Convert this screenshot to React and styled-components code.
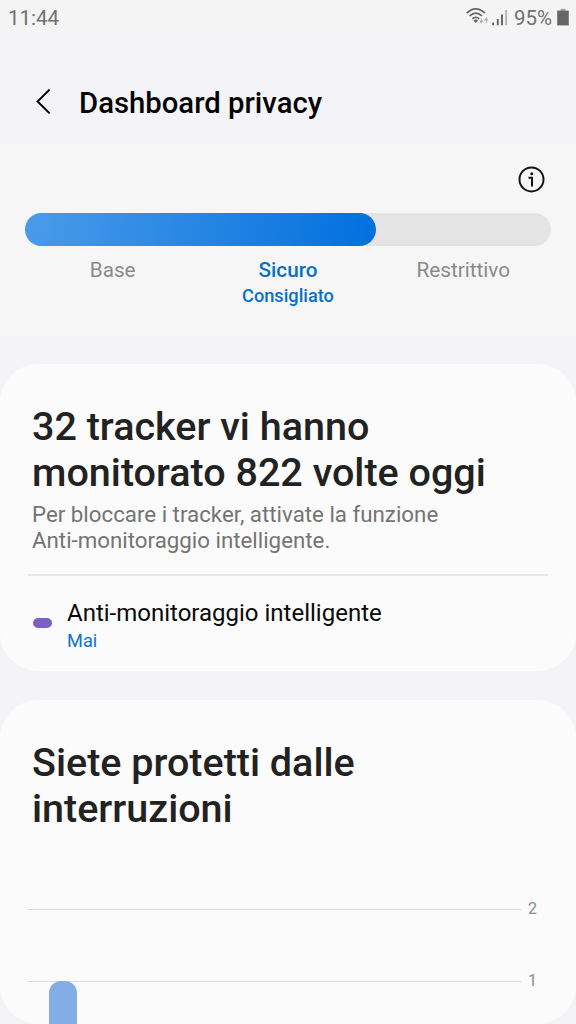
import { createGlobalStyle, styled } from "styled-components";

const levels = [
  { name: "Base" },
  { name: "Sicuro", note: "Consigliato", selected: true },
  { name: "Restrittivo" },
];

const App = () => {
  return (
    <>
      <GlobalStyle />
      <Screen>
        <StatusBar>
          <Clock>11:44</Clock>
          <StatusIcons>
            <WifiIcon />
            <SignalIcon />
            <Battery>95%</Battery>
            <BatteryIcon />
          </StatusIcons>
        </StatusBar>
        <Header>
          <BackButton aria-label="Indietro">
            <svg width="16" height="28" viewBox="0 0 16 28" fill="none">
              <path d="M14.6 0.6 L2.6 12.4 L14.6 24.4" stroke="#000" strokeWidth="2" />
            </svg>
          </BackButton>
          <PageTitle>Dashboard privacy</PageTitle>
        </Header>
        <Protection>
          <InfoButton aria-label="Informazioni">
            <InfoIcon />
          </InfoButton>
          <Track>
            <Fill />
          </Track>
          <Levels>
            {levels.map(({ name, note, selected }) => (
              <Level key={name} $selected={selected}>
                <LevelName $selected={selected}>{name}</LevelName>
                {note && <LevelNote>{note}</LevelNote>}
              </Level>
            ))}
          </Levels>
        </Protection>
        <Cards>
          <Card $height={307}>
            <CardTitle>
              32 tracker vi hanno
              <br />
              monitorato 822 volte oggi
            </CardTitle>
            <Description>
              Per bloccare i tracker, attivate la funzione
              <br />
              Anti-monitoraggio intelligente.
            </Description>
            <Divider />
            <Setting>
              <Marker />
              <div>
                <SettingName>Anti-monitoraggio intelligente</SettingName>
                <SettingValue>Mai</SettingValue>
              </div>
            </Setting>
          </Card>
          <Card $height={324}>
            <CardTitle>
              Siete protetti dalle
              <br />
              interruzioni
            </CardTitle>
            <Chart>
              {[2, 1].map((value) => (
                <GridRow key={value}>
                  <GridLine />
                  <AxisLabel>{value}</AxisLabel>
                </GridRow>
              ))}
              <Bar />
            </Chart>
          </Card>
        </Cards>
      </Screen>
    </>
  );
};

const WifiIcon = () => (
  <svg width="26" height="20" viewBox="0 0 26 20" fill="none">
    <g stroke="#666" strokeWidth="1.7">
      <path d="M0.8 5 Q9.8 -3.2 18.8 5" />
      <path d="M3.6 8 Q9.8 2.2 16 8" />
      <path d="M6.3 10.9 Q9.8 7.8 13.3 10.9" />
    </g>
    <path d="M7.4 12.4 Q9.8 10.6 12.2 12.4 L9.8 15 Z" fill="#666" />
    <path d="M13.2 12.6 h4 l-2 3.2 Z" fill="#aaa" />
    <path d="M15.2 10 v3 M20.4 11.4 v4" stroke="#bbb" strokeWidth="1" />
    <path d="M18.2 12.4 h4.4 l-2.2 -3.2 Z" fill="#aaa" />
  </svg>
);

const SignalIcon = () => (
  <svg width="17" height="18" viewBox="0 0 17 18">
    <path d="M0.2 13.5 h1.9 v2.8 h-1.9 Z M4.8 10 h1.9 v6.3 h-1.9 Z M9 5.5 h2 v10.8 h-2 Z" fill="#666" />
    <path d="M13.2 1 h1.9 v15.3 h-1.9 Z" fill="#b5b5b5" />
  </svg>
);

const BatteryIcon = () => (
  <svg width="12" height="20" viewBox="0 0 12 20">
    <path d="M3.5 0.8 h5 v2.2 h-5 Z" fill="#a8a8a8" />
    <path d="M0.2 2.6 h11.6 v14.8 h-11.6 Z" fill="#666" />
  </svg>
);

const InfoIcon = () => (
  <svg width="28" height="28" viewBox="0 0 28 28" fill="none">
    <circle cx="13.5" cy="14.4" r="12" stroke="#111" strokeWidth="2" />
    <circle cx="13.8" cy="8.7" r="1.5" fill="#111" />
    <path d="M10.5 12.8 H14 V21.6" stroke="#111" strokeWidth="2" />
  </svg>
);

const GlobalStyle = createGlobalStyle`
  * {
    box-sizing: border-box;
  }

  body {
    margin: 0;
    background-color: #f4f4f8;
    font-family: Roboto, "Liberation Sans", sans-serif;
  }
`;

const Screen = styled.main`
  width: 576px;
  height: 1024px;
  overflow: hidden;
  background-color: #f4f4f8;
`;

const StatusBar = styled.div`
  display: flex;
  justify-content: space-between;
  align-items: center;
  height: 32px;
  padding: 3px 7px 0 8px;
  background-color: #f4f4f4;
  color: #707070;
  font-size: 20.5px;
`;

const Clock = styled.span`
  line-height: 28px;
`;

const StatusIcons = styled.div`
  display: flex;
  align-items: center;
`;

const Battery = styled.span`
  margin: 0 5px 0 5px;
  line-height: 28px;
`;

const Header = styled.header`
  display: flex;
  align-items: center;
  height: 112px;
  padding: 29px 0 0 35px;
`;

const BackButton = styled.button`
  display: flex;
  width: 44px;
  padding: 0;
  border: none;
  background: none;
`;

const PageTitle = styled.h1`
  margin: 0;
  font-weight: 500;
  font-size: 29.3px;
  line-height: 36px;
  color: #050505;
`;

const Protection = styled.section`
  height: 192px;
  padding: 21px 25px 0;
  background-color: #f6f6f6;
`;

const InfoButton = styled.button`
  display: flex;
  margin: 0 5px 0 auto;
  padding: 0;
  border: none;
  background: none;
`;

const Track = styled.div`
  height: 33px;
  margin-top: 20px;
  border-radius: 17px;
  background-color: #e4e4e4;
`;

const Fill = styled.div`
  width: 351px;
  height: 33px;
  border-radius: 17px;
  background: linear-gradient(100deg, #4b9be9, #0070de);
`;

const Levels = styled.div`
  display: grid;
  grid-template-columns: repeat(3, 1fr);
  margin-top: 11px;
`;

const Level = styled.div`
  text-align: center;
  color: ${({ $selected }) => ($selected ? "#0870c8" : "#8a8a8a")};
`;

const LevelName = styled.div`
  font-weight: ${({ $selected }) => ($selected ? 500 : 400)};
  font-size: 20.7px;
  line-height: 26px;
`;

const LevelNote = styled.div`
  font-weight: 500;
  font-size: 18.2px;
  line-height: 26px;
`;

const Cards = styled.div`
  display: flex;
  flex-direction: column;
  gap: 29px;
  padding-top: 28px;
`;

const Card = styled.section`
  flex: none;
  height: ${({ $height }) => $height}px;
  padding: 40px 28px 0 32px;
  border-radius: 38px;
  background-color: #fbfbfb;
  overflow: hidden;
`;

const CardTitle = styled.h2`
  margin: 0;
  font-weight: 500;
  font-size: 39.5px;
  line-height: 46px;
  color: #222;
`;

const Description = styled.p`
  margin: 5px 0 0;
  font-size: 22.3px;
  line-height: 26px;
  color: #747474;
`;

const Divider = styled.hr`
  height: 2px;
  margin: 21px 0 0 -4px;
  border: none;
  background-color: #e8e8e8;
`;

const Setting = styled.div`
  display: flex;
  align-items: center;
  padding-top: 22px;
`;

const Marker = styled.span`
  width: 19px;
  height: 10px;
  margin: 0 15px 6px 1px;
  border-radius: 5px;
  background-color: #7d5fc4;
`;

const SettingName = styled.div`
  font-size: 24px;
  line-height: 30px;
  color: #0a0a0a;
`;

const SettingValue = styled.div`
  font-size: 18.2px;
  line-height: 26px;
  color: #0e74c6;
`;

const Chart = styled.div`
  position: relative;
  display: flex;
  flex-direction: column;
  gap: 52px;
  margin: 67px 0 0 -4px;
`;

const GridRow = styled.div`
  display: flex;
  align-items: center;
  gap: 7px;
  height: 20px;
`;

const GridLine = styled.div`
  width: 493px;
  height: 1px;
  background-color: #dedede;
`;

const AxisLabel = styled.span`
  font-size: 16px;
  line-height: 20px;
  color: #8c8c8c;
`;

/* Starts on the line for 1 and runs off the lower edge */
const Bar = styled.div`
  position: absolute;
  top: 82px;
  left: 21px;
  width: 28px;
  height: 60px;
  border-radius: 12px 12px 0 0;
  background-color: #84ade6;
`;

export default App;
